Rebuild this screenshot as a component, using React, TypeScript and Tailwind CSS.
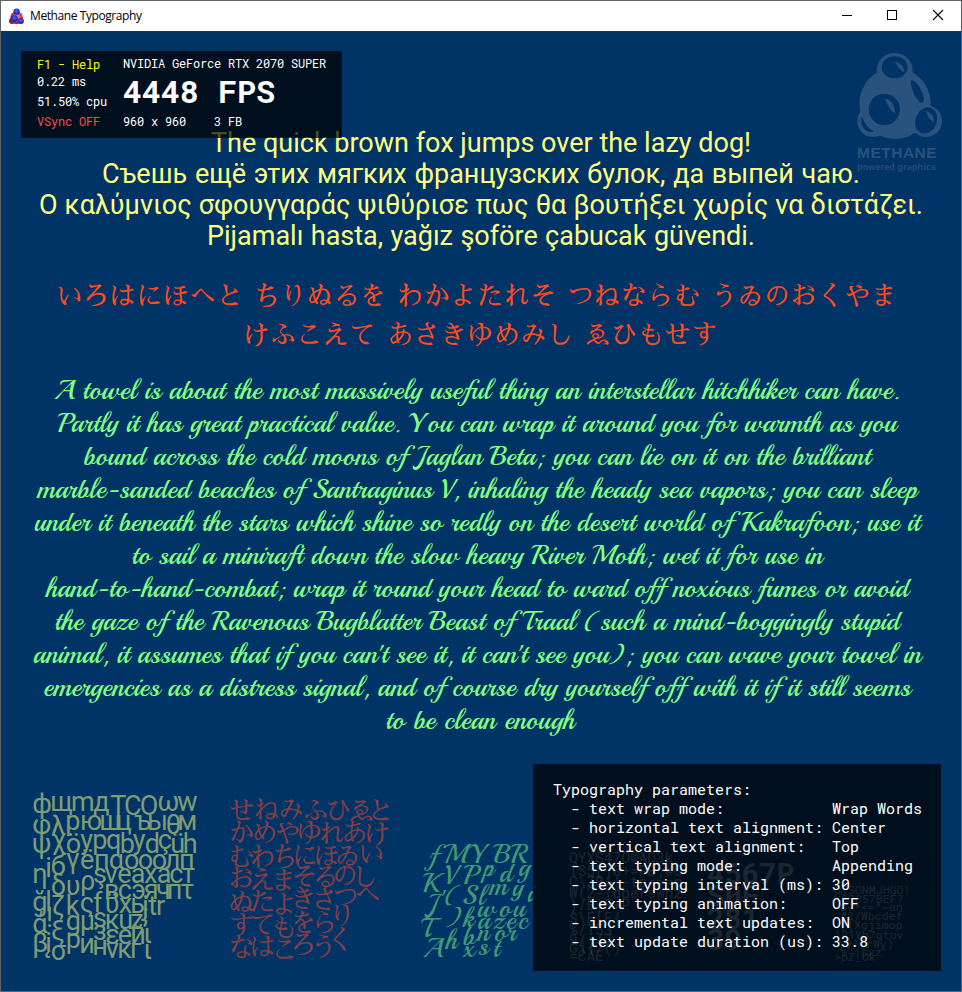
import { useLayoutEffect, useRef, useState } from "react";

type FitProps = {
  text: string;
  width: number;
  className?: string;
  by?: "letter" | "word";
};

/* One line of text whose spacing is spread so that it spans `width` pixels. */
function FitLine({ text, width, className = "", by = "letter" }: FitProps) {
  const ref = useRef<HTMLSpanElement>(null);
  const [gap, setGap] = useState(0);
  useLayoutEffect(() => {
    if (!ref.current) return;
    const natural = ref.current.getBoundingClientRect().width;
    const slots = by === "word" ? text.split(" ").length - 1 : text.length - 1;
    setGap((width - natural) / Math.max(1, slots));
  }, []);
  const style =
    by === "word" ? { wordSpacing: gap } : { letterSpacing: gap, marginRight: -gap };
  return (
    <span ref={ref} style={style} className={`inline-block whitespace-pre ${className}`}>
      {text}
    </span>
  );
}

const pangrams: [string, number][] = [
  ["The quick brown fox jumps over the lazy dog!", 540],
  ["Съешь ещё этих мягких французских булок, да выпей чаю.", 758],
  ["Ο καλύμνιος σφουγγαράς ψιθύρισε πως θα βουτήξει χωρίς να διστάζει.", 884],
  ["Pijamalı hasta, yağız şoföre çabucak güvendi.", 548],
];

const iroha: [string, number][] = [
  ["いろはにほへと ちりぬるを わかよたれそ つねならむ うゐのおくやま", 841],
  ["けふこえて あさきゆめみし ゑひもせす", 475],
];

const towel: [string, number][] = [
  ["A towel is about the most massively useful thing an interstellar hitchhiker can have.", 846],
  ["Partly it has great practical value. You can wrap it around you for warmth as you", 839],
  ["bound across the cold moons of Jaglan Beta; you can lie on it on the brilliant", 787],
  ["marble-sanded beaches of Santraginus V, inhaling the heady sea vapors; you can sleep", 880],
  ["under it beneath the stars which shine so redly on the desert world of Kakrafoon; use it", 886],
  ["to sail a miniraft down the slow heavy River Moth; wet it for use in", 691],
  ["hand-to-hand-combat; wrap it round your head to ward off noxious fumes or avoid", 863],
  ["the gaze of the Ravenous Bugblatter Beast of Traal (such a mind-boggingly stupid", 845],
  ["animal, it assumes that if you can't see it, it can't see you); you can wave your towel in", 888],
  ["emergencies as a distress signal, and of course dry yourself off with it if it still seems", 867],
  ["to be clean enough", 189],
];

/* Glyph atlases: [glyph, left, baseline], in thirds of a pixel. */
type Glyph = [string, number, number];

const latinAtlas: Glyph[] = [
  ["ф", 37, 96], ["щ", 91, 88], ["m", 153, 88], ["д", 220, 88], ["T", 271, 102], ["C", 312, 102], ["O", 359, 102], ["ω", 412, 88], ["w", 472, 88],
  ["φ", 37, 158], ["λ", 93, 160], ["р", 136, 146], ["ю", 180, 146], ["ш", 238, 146], ["ц", 287, 146], ["ъ", 343, 146], ["ы", 381, 146], ["θ", 437, 158], ["м", 472, 146],
  ["ψ", 37, 215], ["χ", 94, 202], ["ö", 137, 216], ["y", 181, 203], ["р", 217, 203], ["q", 258, 203], ["b", 299, 216], ["y", 338, 203], ["d", 374, 216], ["ç", 413, 203], ["ü", 451, 216], ["h", 488, 216],
  ["η", 37, 305], ["i", 76, 287], ["б", 92, 282], ["γ", 138, 260], ["ё", 180, 262], ["п", 222, 262], ["α", 266, 262], ["о", 312, 262], ["ο", 353, 262], ["o", 395, 262], ["л", 434, 262], ["п", 477, 262],
  ["δ", 92, 342], ["υ", 137, 340], ["ρ", 180, 326], ["ş", 219, 305], ["v", 254, 305], ["e", 292, 305], ["a", 332, 305], ["x", 372, 305], ["а", 410, 305], ["с", 448, 305], ["т", 486, 305],
  ["ğ", 37, 388], ["l", 76, 388], ["в", 252, 352], ["с", 293, 352], ["э", 334, 352], ["я", 371, 352], ["ч", 408, 352], ["п", 440, 352], ["τ", 481, 352],
  ["ζ", 93, 400], ["k", 137, 402], ["ς", 179, 392], ["f", 219, 392], ["ϋ", 254, 394], ["х", 296, 394], ["ь", 331, 394], ["j", 367, 400], ["t", 385, 400], ["r", 408, 400],
  ["ά", 37, 456], ["!", 78, 438], ["ξ", 93, 476], ["g", 137, 445], ["μ", 179, 445], ["s", 219, 438], ["к", 254, 442], ["u", 295, 442], ["z", 331, 442], [";", 368, 425],
  ["β", 37, 513], ["į", 76, 512], ["σ", 92, 535], ["р", 137, 500], ["и", 178, 514], ["з", 219, 475], ["н", 217, 520], ["ε", 256, 488], ["e", 293, 488], ["й", 331, 488], ["ι", 370, 484],
  ["v", 257, 531], ["κ", 292, 531], ["г", 330, 531], ["ι", 370, 533],
];

/* Kana are given by their centres instead of their baselines. */
const kanaAtlas: Glyph[] = [
  ["せ", 80, 88], ["ね", 155, 86], ["み", 228, 86], ["ふ", 300, 88], ["ひ", 370, 88], ["ゑ", 440, 88], ["と", 496, 88],
  ["か", 78, 155], ["め", 148, 155], ["や", 217, 155], ["ゆ", 283, 155], ["れ", 350, 157], ["あ", 418, 155], ["け", 485, 156],
  ["む", 78, 225], ["わ", 142, 225], ["ち", 207, 227], ["に", 270, 222], ["ほ", 335, 222], ["ゐ", 398, 222], ["い", 468, 218],
  ["お", 78, 293], ["え", 142, 295], ["ま", 205, 297], ["そ", 268, 285], ["る", 330, 287], ["の", 390, 282], ["し", 450, 285],
  ["ぬ", 78, 364], ["た", 142, 362], ["よ", 207, 370], ["き", 265, 352], ["さ", 328, 356], ["つ", 390, 345], ["へ", 458, 340],
  ["す", 78, 432], ["て", 143, 430], ["も", 207, 440], ["を", 265, 425], ["ら", 328, 425], ["り", 380, 403],
  ["な", 78, 500], ["は", 143, 495], ["こ", 207, 505], ["ろ", 265, 490], ["う", 325, 495], ["く", 376, 474],
];

const scriptAtlas: Glyph[] = [
  ["f", 86, 130], ["M", 133, 128], ["Y", 210, 128], ["B", 281, 128], ["R", 332, 128],
  ["K", 66, 215], ["V", 132, 190], ["P", 190, 190], ["p", 250, 165], ["d", 298, 184], ["g", 355, 165],
  ["J", 80, 278], ["'", 118, 262], ["(", 132, 250], ["S", 186, 250], ["l", 234, 252], ["m", 267, 223], ["y", 336, 225], ["i", 381, 243],
  [")", 138, 315], ["k", 188, 318], ["w", 231, 290], ["o", 296, 290], ["u", 338, 290],
  ["T", 64, 350], ["a", 232, 325], ["z", 278, 325], ["e", 318, 325], ["c", 354, 325],
  ["h", 136, 386], ["b", 188, 372], ["n", 232, 360], ["o", 282, 360], ["r", 320, 360],
  ["A", 68, 410], ["x", 188, 410], ["s", 234, 402], ["t", 278, 410],
];

function Atlas({
  glyphs,
  className,
  size,
  baseline,
  centred = false,
}: {
  glyphs: Glyph[];
  className: string;
  size: number;
  baseline: number;
  centred?: boolean;
}) {
  return (
    <div className={`absolute leading-none ${className}`}>
      {glyphs.map(([g, x, y], i) => (
        <span
          key={i}
          className="absolute whitespace-pre"
          style={{
            left: x / 3 - (centred ? size / 2 : 0),
            top: y / 3 - (centred ? size / 2 : size * baseline),
          }}
        >
          {g}
        </span>
      ))}
    </div>
  );
}

type Row = [string, number, number];

const monoRows: Row[] = [
  ["QYXS47O@AD3k", 0, 0], ["TS5[]0+=PB;#G", 0, 13], ["C\\Z0+|-te<>=g", 0, 24], ["W(2-|qperswnz", 0, 35],
  [")/E|F+P", 0, 47], ["$\\E[F{", 0, 60], ["%/T53", 0, 72], ["9/j{7", 0, 82], ["Gj{7()", 0, 90], ["=CAE", 0, 98],
];
const boldRows: Row[] = [["4567P", 0, 0], ["S0F", 0, 22], ["281", 0, 45], ["39", 0, 66]];
const smallRows: Row[] = [
  ["Q\\SONMJHGD!", 0, 0], ["%$3857BEF?", 0, 9], ["&+*<=^~an", 6, 17], ["#2/Wbcdef", 6, 26], ["[(Xgjimop", 6, 35],
  ["1R1Yh7qtuv", 0, 45], ["|9^{rWy)", 4, 54], ["%\"|sxz'", 6, 62], [">pZ_Uk", 0, 67],
];

function AtlasRows({ rows, className }: { rows: Row[]; className: string }) {
  return (
    <div className={`absolute leading-none ${className}`}>
      {rows.map(([t, x, y], i) => (
        <span key={i} className="absolute whitespace-pre" style={{ left: x, top: y }}>
          {t}
        </span>
      ))}
    </div>
  );
}

const params: [string, string][] = [
  ["text wrap mode:", "Wrap Words"],
  ["horizontal text alignment:", "Center"],
  ["vertical text alignment:", "Top"],
  ["text typing mode:", "Appending"],
  ["text typing interval (ms):", "30"],
  ["text typing animation:", "OFF"],
  ["incremental text updates:", "ON"],
  ["text update duration (us):", "33.8"],
];

function AppIcon() {
  return (
    <svg width="17" height="17" viewBox="0 0 17 17">
      <defs>
        <radialGradient id="red" cx="0.55" cy="0.4">
          <stop offset="0" stopColor="#ff8090" />
          <stop offset="1" stopColor="#a82050" />
        </radialGradient>
        <radialGradient id="blue" cx="0.5" cy="0.4">
          <stop offset="0" stopColor="#5068f8" />
          <stop offset="1" stopColor="#1c1cae" />
        </radialGradient>
      </defs>
      <circle cx="4" cy="13" r="3" fill="#8c1848" />
      <circle cx="8.6" cy="9.8" r="6.4" fill="url(#red)" />
      <circle cx="8.6" cy="3.6" r="3.2" fill="url(#blue)" />
      <circle cx="6.4" cy="10.6" r="3.3" fill="url(#blue)" />
      <circle cx="13" cy="13" r="2.9" fill="url(#blue)" />
    </svg>
  );
}

function MethaneLogo() {
  return (
    <svg width="90" height="90" viewBox="0 0 270 270" className="absolute left-[854px] top-[20px]">
      <g fill="#29527d">
        <circle cx="120" cy="157" r="107" />
        <ellipse cx="119" cy="58" rx="54" ry="52" />
        <circle cx="54" cy="211" r="47" />
      </g>
      <ellipse cx="119" cy="49" rx="39" ry="33" fill="#003366" />
      <path d="M120 32q27 4 28 32q-17-9-28-32z" fill="#29527d" />
      <circle cx="88" cy="175" r="47" fill="#003366" />
      <path d="M90 142q28 6 31 47q-20-12-31-47z" fill="#29527d" />
      <path d="M167 87q18 4 30 28q12 22 9 34q-4 12-14 2q-24-26-25-64z" fill="#003366" />
      <path d="M21 196q10 34 36 45q-12 6-26-4q-18-15-10-41z" fill="#003366" />
      <circle cx="213" cy="210" r="48" fill="#29527d" />
      <path d="M216 168q32 4 30 38q-5 38-38 41q-29-2-28-32q4-39 36-47z" fill="#003366" />
      <path d="M213 180q24 6 24 34q-17-9-24-34z" fill="#29527d" />
    </svg>
  );
}

export default function App() {
  return (
    <div className="flex h-[992px] w-[962px] flex-col overflow-hidden border border-[#5f6368] bg-[#003366] font-['Roboto','Noto_Sans',sans-serif]">
      <header className="flex h-[30px] shrink-0 items-center bg-white pl-[7px] text-black">
        <AppIcon />
        <div className="ml-[5px] font-['Open_Sans','Noto_Sans',sans-serif] text-[12px] leading-[16px]">
          <FitLine text="Methane Typography" width={112} />
        </div>
        <svg width="106" height="12" viewBox="0 0 106 12" className="relative -top-px mr-[16px] ml-auto" fill="none" stroke="#000" shapeRendering="crispEdges">
          <path d="M3 6.5h10" />
          <rect x="48.5" y="1.5" width="9" height="9" />
          <path d="M94 1l10 10M104 1L94 11" shapeRendering="auto" strokeWidth="1.1" />
        </svg>
      </header>

      <main className="relative flex-1">
        <section className="flex flex-col items-center pt-[97px] text-[27px] leading-[31px] text-[#ffff80]">
          {pangrams.map(([t, w]) => (
            <FitLine key={t} text={t} width={w} by="word" />
          ))}
        </section>

        <section
          lang="ja"
          className="mt-[25px] flex flex-col items-center font-['Sawarabi_Mincho','Noto_Serif_CJK_JP','Noto_Sans_CJK_JP',serif] text-[26.67px] leading-[39px] text-[#ff4c1f]"
        >
          {iroha.map(([t, w], i) => (
            <FitLine key={t} text={t} width={w} by="word" className={i === 0 ? "mr-[9px]" : "mr-[2px]"} />
          ))}
        </section>

        <section className="mt-[19px] flex flex-col items-center pr-[8px] font-['Playball','Liberation_Serif',cursive] text-[27.3px] leading-[33px] text-[#80ff80] [font-kerning:none]">
          {towel.map(([t, w], i) => (
            <FitLine key={t} text={t} width={w} by="word" className={i === towel.length - 1 ? "ml-[6px]" : ""} />
          ))}
        </section>

        <Atlas glyphs={latinAtlas} size={27} baseline={0.8415} className="left-[19px] top-[751px] text-[27px] text-[#7f9c73]" />
        <Atlas
          glyphs={kanaAtlas}
          size={26.67}
          baseline={0.88}
          centred
          className="left-[214px] top-[751px] font-['Sawarabi_Mincho','Noto_Serif_CJK_JP','Noto_Sans_CJK_JP',serif] text-[26.67px] text-[#803f47]"
        />
        <Atlas
          glyphs={scriptAtlas}
          size={27}
          baseline={0.867}
          className="left-[399px] top-[791px] font-['Playball','Liberation_Serif',cursive] text-[27px] text-[#409973]"
        />
        <AtlasRows rows={monoRows} className="left-[568px] top-[820px] font-['Roboto_Mono','DejaVu_Sans_Mono',monospace] text-[14.5px] text-white/40" />
        <AtlasRows rows={boldRows} className="left-[706px] top-[828px] font-['Roboto_Mono','Roboto',monospace] text-[29px] font-bold text-white/40" />
        <AtlasRows rows={smallRows} className="left-[833px] top-[853px] font-['Roboto_Mono','DejaVu_Sans_Mono',monospace] text-[11.6px] text-white/40" />

        <div className="absolute top-[20px] left-[20px] flex h-[87px] w-[321px] gap-[16px] bg-black/70 pl-[16px] font-['Roboto_Mono','DejaVu_Sans_Mono',monospace] text-[12px] tracking-[-0.2px] text-white">
          <div className="flex w-[70px] flex-col whitespace-pre">
            <span className="mt-[4px] h-[18px] leading-[19px] text-[#ffff00]">F1 - Help</span>
            <span className="h-[16px] leading-[16px]">0.22 ms</span>
            <span className="mt-[3px] h-[19px] leading-[19px]">51.50% cpu</span>
            <span className="h-[20px] leading-[21px] text-[#ff4d4d]">VSync OFF</span>
          </div>
          <div className="flex flex-col whitespace-pre">
            <span className="mt-[4px] h-[16px] leading-[17px]">NVIDIA GeForce RTX 2070 SUPER</span>
            <div className="h-[40px] font-['Roboto_Mono','Roboto',monospace] text-[31.67px] leading-[40px] font-bold tracking-normal">
              <FitLine text="4448 FPS" width={152} />
            </div>
            <span className="leading-[20px]">960 x 960    3 FB</span>
          </div>
        </div>

        <div className="absolute top-[733px] left-[532px] h-[207px] w-[408px] bg-black/70 pt-[16px] pl-[20px] font-['Roboto_Mono','DejaVu_Sans_Mono',monospace] text-[15px] leading-[19px] whitespace-pre text-white">
          <div>Typography parameters:</div>
          {params.map(([k, v]) => (
            <div key={k} className="flex">
              <span className="w-[279px]">{"  - " + k}</span>
              <span>{v}</span>
            </div>
          ))}
        </div>

        <MethaneLogo />
        <div className="absolute top-[114px] left-[856px] flex flex-col font-['Liberation_Sans',sans-serif] text-[#29527d]">
          <FitLine text="METHANE" width={80} className="text-[15.5px] leading-[16px] font-bold" />
          <FitLine text="powered graphics" width={79} className="text-[9px] leading-[12px] font-bold text-[#244d78]" />
        </div>
      </main>
    </div>
  );
}
